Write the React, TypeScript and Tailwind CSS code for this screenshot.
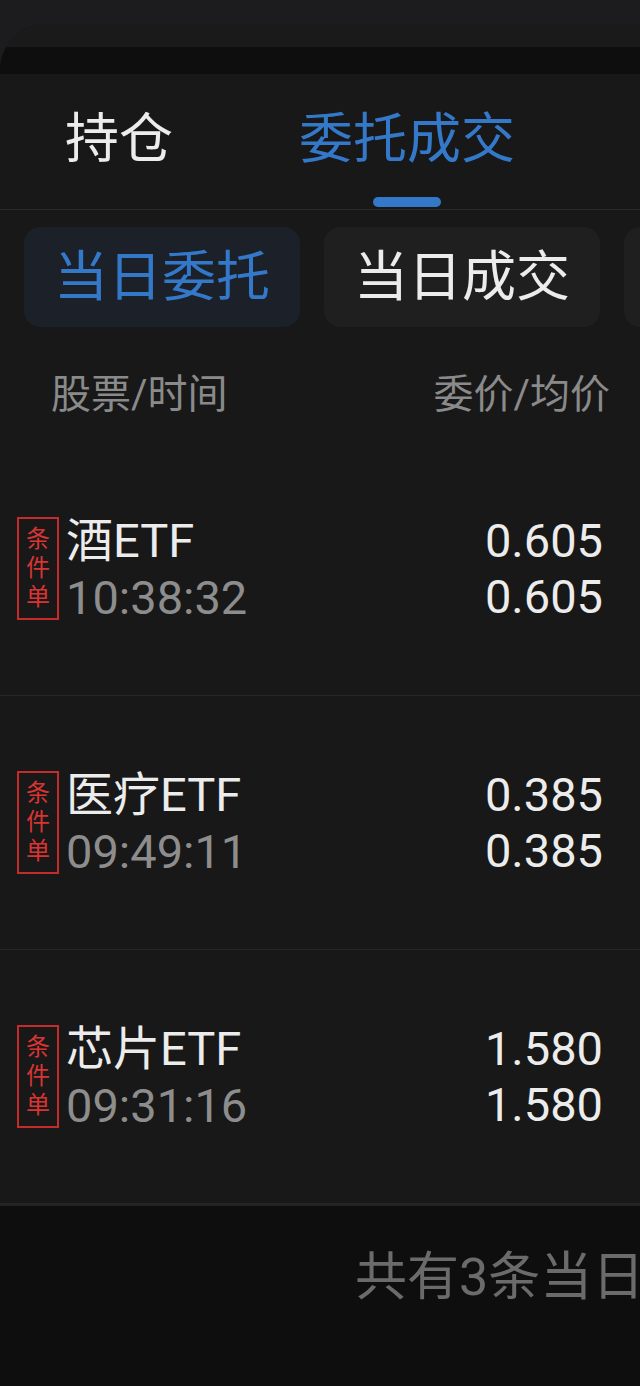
const FONT = { fontFamily: 'Roboto, "Noto Sans CJK SC", "Noto Sans", sans-serif' };

interface Order {
    name: string;
    time: string;
    price: string;
    avg: string;
}

const orders: Order[] = [
    { name: '酒ETF', time: '10:38:32', price: '0.605', avg: '0.605' },
    { name: '医疗ETF', time: '09:49:11', price: '0.385', avg: '0.385' },
    { name: '芯片ETF', time: '09:31:16', price: '1.580', avg: '1.580' },
];

function OrderRow({ order }: { order: Order }) {
    return (
        <div className="flex items-center justify-between h-[254px] border-b border-[#262626] pl-[17px] pr-[37px]">
            <div className="flex items-center">
                {/* 条件单 badge */}
                <div className="w-[42px] h-[103px] border-2 border-[#c42b2b] flex flex-col items-center justify-center text-[24px] leading-[29px] text-[#d93434]">
                    <span>条</span>
                    <span>件</span>
                    <span>单</span>
                </div>
                <div className="ml-[7px] flex flex-col">
                    <span className="text-[47px] leading-[57px] text-[#ececec]">{order.name}</span>
                    <span className="text-[47px] leading-[57px] text-[#8d8d8d]">{order.time}</span>
                </div>
            </div>
            <div className="flex flex-col items-end text-[47px] leading-[56px] text-[#ececec]">
                <span>{order.price}</span>
                <span>{order.avg}</span>
            </div>
        </div>
    );
}

export default function App() {
    return (
        <div className="w-[640px] h-[1386px] bg-[#1c1c1e] pt-[24px] overflow-hidden" style={FONT}>
            <div className="h-full flex flex-col bg-[#181818] rounded-tl-[46px] overflow-hidden">
                <div className="h-[23px] bg-[#1a1a1a]" />
                <div className="h-[27px] bg-[#0e0e0e]" />

                {/* Top tabs */}
                <div className="flex pl-[65px] gap-[126px] pt-[39px] pb-[2px] border-b border-[#2a2a2a]">
                    <div className="flex flex-col items-center">
                        <span className="text-[54px] leading-[54px] text-[#ececec]">持仓</span>
                        <div className="mt-[30px] h-[10px] w-[68px]" />
                    </div>
                    <div className="flex flex-col items-center">
                        <span className="text-[54px] leading-[54px] text-[#3479c9]">委托成交</span>
                        <div className="mt-[30px] h-[10px] w-[68px] rounded-full bg-[#3479c9]" />
                    </div>
                </div>

                {/* Sub tabs */}
                <div className="flex gap-[24px] pl-[24px] pt-[17px] whitespace-nowrap">
                    <div className="shrink-0 w-[276px] h-[100px] rounded-[16px] bg-[#1b2029] flex items-center justify-center text-[54px] text-[#3479c9]">
                        当日委托
                    </div>
                    <div className="shrink-0 w-[276px] h-[100px] rounded-[16px] bg-[#1f1f1f] flex items-center justify-center text-[54px] text-[#ececec]">
                        当日成交
                    </div>
                    <div className="shrink-0 w-[276px] h-[100px] rounded-[16px] bg-[#1f1f1f]" />
                </div>

                {/* Column header */}
                <div className="flex justify-between pl-[51px] pr-[30px] pt-[48px] pb-[27px] text-[40px] leading-[40px] text-[#8a8a8a]">
                    <span>股票/时间</span>
                    <span>委价/均价</span>
                </div>

                {orders.map((o) => (
                    <OrderRow key={o.time} order={o} />
                ))}

                {/* Footer */}
                <div className="flex-1 bg-[#0e0e0e] border-t-2 border-[#232323] pt-[46px] pl-[355px] whitespace-nowrap text-[52px] leading-[52px] text-[#6b6b6b]">
                    共有3条当日委托
                </div>
            </div>
        </div>
    );
}
